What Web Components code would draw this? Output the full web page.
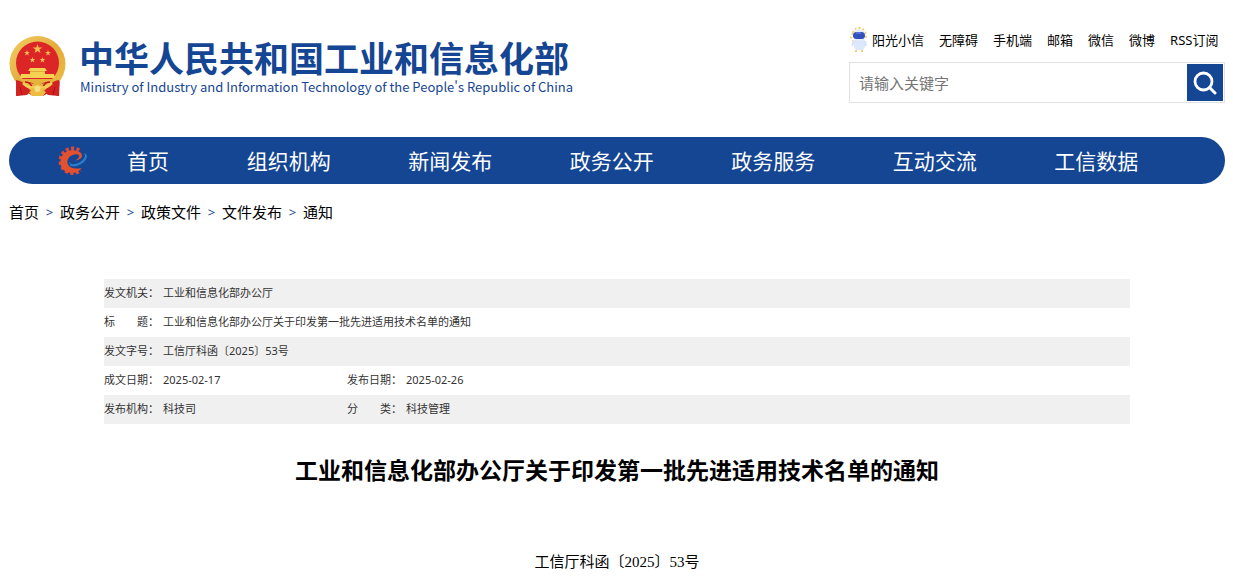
<!DOCTYPE html>
<html lang="zh-CN">
<head>
<meta charset="utf-8">
<meta name="viewport" content="width=device-width, initial-scale=1">
<title>工业和信息化部办公厅关于印发第一批先进适用技术名单的通知</title>
<style>
  body {
    margin: 0;
    background: #fff;
    color: #000;
    font: 15px/24px "Noto Sans", "Noto Sans CJK SC", sans-serif;
    --brand: #154693;
    --stripe: #f0f0f0;
  }
</style>
</head>
<body>
<site-page>
  <site-header slot="header">
    <site-logo slot="logo">
      中华人民共和国工业和信息化部
      <span slot="english">Ministry of Industry and Information Technology of the People's Republic of China</span>
    </site-logo>
    <quick-links slot="tools">
      <a href="#xiaoxin">阳光小信</a>
      <a href="#access">无障碍</a>
      <a href="#mobile">手机端</a>
      <a href="#mail">邮箱</a>
      <a href="#wechat">微信</a>
      <a href="#weibo">微博</a>
      <a href="#rss">RSS订阅</a>
    </quick-links>
    <search-box slot="tools"></search-box>
  </site-header>
  <main-nav slot="header">
    <a href="#home">首页</a>
    <a href="#org">组织机构</a>
    <a href="#news">新闻发布</a>
    <a href="#affairs">政务公开</a>
    <a href="#services">政务服务</a>
    <a href="#interact">互动交流</a>
    <a href="#data">工信数据</a>
  </main-nav>
  <bread-crumbs slot="header">
    <crumb-item href="#home">首页</crumb-item>
    <crumb-item href="#affairs">政务公开</crumb-item>
    <crumb-item href="#policy">政策文件</crumb-item>
    <crumb-item href="#files">文件发布</crumb-item>
    <crumb-item href="#notice">通知</crumb-item>
  </bread-crumbs>
  <document-meta></document-meta>
  <document-article>
    <span slot="title">工业和信息化部办公厅关于印发第一批先进适用技术名单的通知</span>
    工信厅科函〔2025〕53号
  </document-article>
</site-page>

<script>
const define = (name, markup, setup) => customElements.define(name, class extends HTMLElement {
  constructor() {
    super();
    const template = document.createElement('template');
    template.innerHTML = markup;
    this.attachShadow({ mode: 'open' }).append(template.content.cloneNode(true));
  }
  connectedCallback() { if (setup) setup(this); }
});

define('site-page', `
  <style>
    :host { display: block; padding: 0 8px 0 9px; }
    main { padding: 0 95px; }
  </style>
  <slot name="header"></slot>
  <main><slot></slot></main>`);

define('site-header', `
  <style>
    :host { display: block; }
    header { display: flex; justify-content: space-between; align-items: flex-start; padding-top: 28px; height: 109px; }
    .logo { padding-top: 7px; }
    .tools { width: 376px; display: flex; flex-direction: column; gap: 10px; }
  </style>
  <header>
    <div class="logo"><slot name="logo"></slot></div>
    <div class="tools"><slot name="tools"></slot></div>
  </header>`);

define('state-emblem', `
  <style>:host, svg { display: block; } svg { width: 58px; height: 63px; }</style>
  <svg viewBox="0 0 58 63" aria-hidden="true">
    <defs>
      <linearGradient id="gold" x1="0" y1="0" x2="1" y2="1">
        <stop offset="0" stop-color="#f3d064"/><stop offset=".5" stop-color="#e2ac3e"/><stop offset="1" stop-color="#edbd43"/>
      </linearGradient>
      <path id="star" d="M0-5 1.2-1.6H4.8L1.9.5 3 4 0 1.9-3 4-1.9.5-4.8-1.6H-1.2Z"/>
    </defs>
    <path d="M7 42 8 61 19 58 24 61H34L39 58 50 61 51 42Z" fill="#c41a20"/>
    <circle cx="28.500" cy="29" r="28" fill="url(#gold)"/>
    <circle cx="28.500" cy="28" r="21.500" fill="#dc2527"/>
    <g fill="#f0bd50">
      <use href="#star" transform="translate(28.500 14)"/>
      <use href="#star" transform="translate(18 18) scale(.6)"/>
      <use href="#star" transform="translate(39 18) scale(.6)"/>
      <use href="#star" transform="translate(23.500 25) scale(.6)"/>
      <use href="#star" transform="translate(33.500 25) scale(.6)"/>
    </g>
    <path d="M21 33H36L38 36H19ZM21 36H36V39H45L46 43H11L12 39H21Z" fill="#f5d253"/>
    <path d="M21 36.500H36" stroke="#d98d2b" stroke-width=".6"/>
    <path d="M10 44H47L42 47Q34 46 28.500 52 23 46 15 47Z" fill="#e6b33c"/>
    <path d="M7 45Q14 46 17 51L22 56 18 60 7 61Z" fill="#d22323"/>
    <path d="M50 45Q43 46 40 51L35 56 39 60 50 61Z" fill="#d22323"/>
    <path d="M16 47Q22 47 23 53M41 47Q35 47 34 53" fill="none" stroke="#b8141b" stroke-width="1.500"/>
    <path d="M14 48Q21 55 28.500 51 36 55 43 48" fill="none" stroke="#f3cd55" stroke-width="2.500"/>
    <path d="M20 57Q28.500 51 37 57L34 61H23Z" fill="#edbd43"/>
    <circle cx="28.500" cy="54" r="3" fill="#f9df83"/>
    <path d="M11 52 13 60M46 52 44 60" stroke="#a81117" stroke-width="1"/>
  </svg>`);

define('site-logo', `
  <style>
    :host { display: block; color: var(--brand); }
    .logo { display: flex; gap: 12px; color: inherit; text-decoration: none; white-space: nowrap; }
    .name { display: block; padding-top: 5px; font: 700 35px/40px "Liberation Sans", "Noto Sans CJK SC", sans-serif; }
    .english { display: block; padding-left: 1px; font: 400 13px/14px "Noto Sans CJK SC", sans-serif; }
  </style>
  <a class="logo" href="#home">
    <state-emblem></state-emblem>
    <span>
      <span class="name"><slot></slot></span>
      <span class="english"><slot name="english"></slot></span>
    </span>
  </a>`);

define('quick-links', `
  <style>
    :host { display: flex; align-items: center; gap: 15px; height: 24px; font-size: 13px; white-space: nowrap; }
    svg { width: 20px; height: 26px; margin: 0 -12px 0 0; flex: none; }
    ::slotted(a) { color: #000; text-decoration: none; }
  </style>
  <svg viewBox="0 0 20 26" aria-hidden="true">
    <path d="M4 6Q5 1 10 1T17 7V12M4 6 2 10 4 14" fill="none" stroke="#f2d477" stroke-width="2" stroke-dasharray="2 2"/>
    <rect x="5" y="11" width="11" height="12" rx="4" fill="#dbe7fa"/>
    <path d="M5 14 3 19M16 14 17 19" stroke="#d6e3f8" stroke-width="2"/>
    <ellipse cx="10" cy="8" rx="6" ry="6" fill="#e5edfb"/>
    <rect x="4" y="5" width="12" height="7" rx="3.500" fill="#334fc0"/>
    <path d="M7 6H12" stroke="#7893e8"/>
    <path d="M7 23V25M13 23V25" stroke="#edcf68" stroke-width="2"/>
  </svg>
  <slot></slot>`);

define('search-box', `
  <style>
    :host { display: block; }
    form { display: flex; box-sizing: border-box; height: 41px; padding: 1px; border: 1px solid #e2e2e2; background: #fff; }
    input { flex: 1; min-width: 0; border: 0; outline: 0; padding: 0 8px; background: transparent; font: inherit; color: #333; }
    input::placeholder { color: #757575; opacity: 1; }
    button { width: 36px; border: 0; padding: 0; display: grid; place-items: center; background: var(--brand); cursor: pointer; }
    svg { width: 24px; height: 24px; }
  </style>
  <form role="search" onsubmit="return false">
    <input type="text" placeholder="请输入关键字" aria-label="请输入关键字">
    <button type="submit" aria-label="搜索">
      <svg viewBox="0 0 24 24" fill="none" stroke="#fff" aria-hidden="true">
        <circle cx="10.500" cy="10.500" r="8.500" stroke-width="2.800"/>
        <path d="M16.500 16.500 22 22" stroke-width="3" stroke-linecap="round"/>
      </svg>
    </button>
  </form>`);

define('gear-mark', `
  <style>:host, svg { display: block; } svg { width: 31px; height: 30px; }</style>
  <svg viewBox="0 0 31 30" aria-hidden="true">
    <path d="M22 4.500A12 12 0 1 0 23.500 24" fill="none" stroke="#d94a3a" stroke-width="4.500" stroke-dasharray="3 2.200"/>
    <path d="M24 7C18 2.500 8 3.500 4.500 11 1 19 6 26.500 14 27 19 27.200 22 25.500 24.500 22 18 23.500 11.500 22 10.500 17 9.500 11.500 16 7 21 8.500 23.500 10 22 12.500 18 14.500 24 14 26.500 10.500 24 7Z" fill="#e4512f"/>
    <path d="M27 7C32 8 30 15 23 18 18 20 12 19.500 12 15.500 13 19 19 19 24 15.500 28 12.500 29 9.500 27 7Z" fill="#2a87d2"/>
    <path d="M13 19C19 21.500 27 17 29 11" fill="none" stroke="#2a7cc8" stroke-width="1.500"/>
  </svg>`);

define('main-nav', `
  <style>
    :host { display: block; }
    nav {
      display: grid; grid-template-columns: 31px 120px repeat(6, 1fr); align-items: center;
      height: 47px; padding: 0 48px; border-radius: 24px;
      background: var(--brand); font-size: 21px; line-height: 30px; text-align: center; white-space: nowrap;
    }
    ::slotted(a) { color: #fff; text-decoration: none; }
  </style>
  <nav aria-label="主导航"><gear-mark></gear-mark><slot></slot></nav>`);

define('bread-crumbs', `
  <style>
    :host { display: block; padding: 16px 0 54px; }
    nav { display: flex; }
  </style>
  <nav aria-label="当前位置"><slot></slot></nav>`);

define('crumb-item', `
  <style>
    :host { display: flex; line-height: 25px; white-space: nowrap; }
    a { color: #000; text-decoration: none; }
    span { width: 21px; text-align: center; color: var(--brand); font-size: 13px; }
    :host(:last-of-type) span { display: none; }
  </style>
  <a><slot></slot></a><span aria-hidden="true">&gt;</span>`,
  el => { el.shadowRoot.querySelector('a').href = el.getAttribute('href'); });

define('document-meta', `
  <style>
    :host { display: block; font-size: 11px; line-height: 17px; color: #333; }
    table { width: 100%; table-layout: fixed; border-collapse: collapse; }
    .label { width: 59px; }
    .short { width: 184px; }
    th, td { height: 17px; padding: 5px 0 7px; text-align: left; font-weight: 400; white-space: nowrap; }
    tr:nth-child(odd) { background: var(--stripe); }
  </style>
  <table>
    <colgroup><col class="label"><col class="short"><col class="label"><col></colgroup>
    <tbody>
      <tr><th scope="row">发文机关：</th><td colspan="3">工业和信息化部办公厅</td></tr>
      <tr><th scope="row">标　　题：</th><td colspan="3">工业和信息化部办公厅关于印发第一批先进适用技术名单的通知</td></tr>
      <tr><th scope="row">发文字号：</th><td colspan="3">工信厅科函〔2025〕53号</td></tr>
      <tr><th scope="row">成文日期：</th><td>2025-02-17</td><th scope="row">发布日期：</th><td>2025-02-26</td></tr>
      <tr><th scope="row">发布机构：</th><td>科技司</td><th scope="row">分　　类：</th><td>科技管理</td></tr>
    </tbody>
  </table>`);

define('document-article', `
  <style>
    :host { display: block; text-align: center; }
    h1 { margin: 28px 0 62px; font-size: 23px; line-height: 36px; font-weight: 700; }
    p { margin: 0; font-family: "Liberation Serif", "Noto Sans CJK SC", serif; }
  </style>
  <article>
    <h1><slot name="title"></slot></h1>
    <p><slot></slot></p>
  </article>`);
</script>
</body>
</html>
